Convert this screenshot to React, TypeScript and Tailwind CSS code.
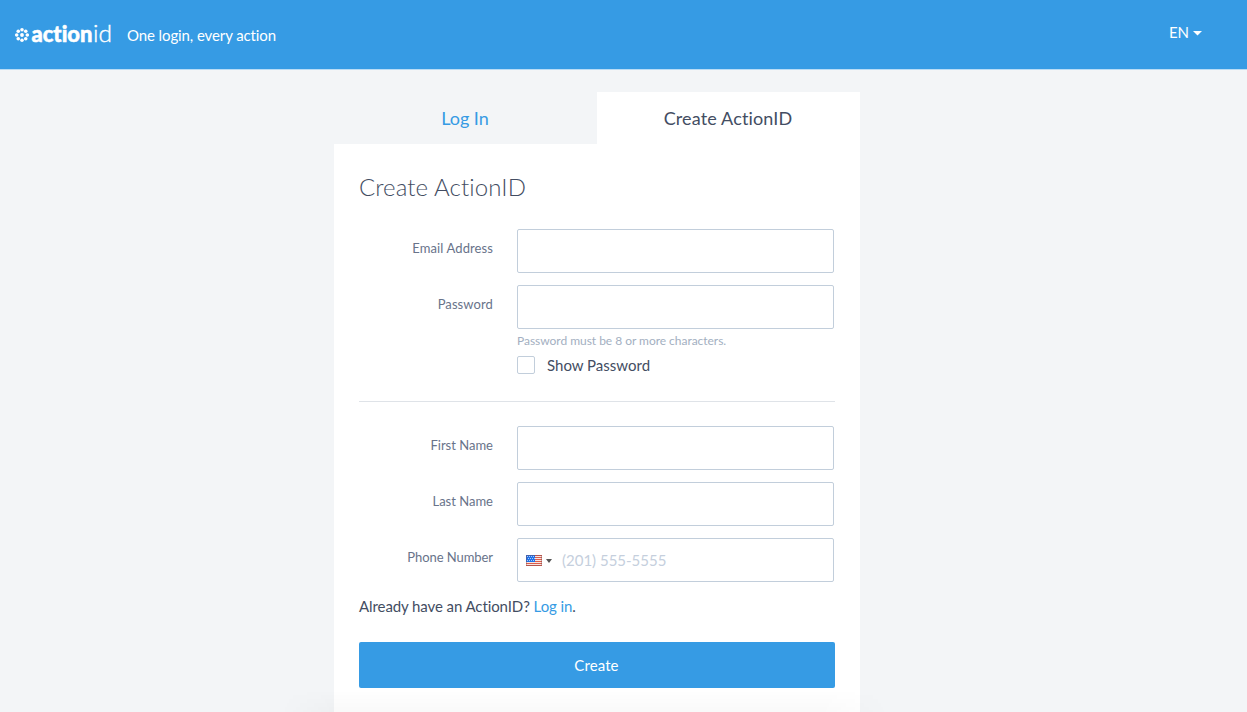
import React from "react";

const FIELD =
  "block h-11 w-[317px] rounded-[2px] border border-[#c2cedb] bg-white text-[15px] text-[#434d62] outline-none placeholder:text-[#c5cfdd] placeholder:opacity-100";

function Logo() {
  const dots = [0, 45, 90, 135, 180, 225, 270, 315];
  return (
    <svg className="overflow-visible" width="98" height="26" viewBox="0 0 98 26" fill="#fff" aria-label="actionid">
      <circle cx="7" cy="13" r="1.9" />
      {dots.map((a) => (
        <circle
          key={a}
          cx={7 + 5.3 * Math.cos((a * Math.PI) / 180)}
          cy={13 + 5.3 * Math.sin((a * Math.PI) / 180)}
          r="1.8"
        />
      ))}
      <text x="16.5" y="20" fontFamily="Lato, sans-serif" fontWeight="900" fontSize="22" stroke="#fff" strokeWidth=".5" textLength="61" lengthAdjust="spacingAndGlyphs">
        action
      </text>
      <text x="78" y="20" fontFamily="Lato, sans-serif" fontWeight="300" fontSize="24" stroke="#fff" strokeWidth=".4" textLength="19" lengthAdjust="spacingAndGlyphs">
        id
      </text>
    </svg>
  );
}

function Flag() {
  return (
    <svg width="16" height="11" viewBox="0 0 16 11" shapeRendering="crispEdges">
      <rect width="16" height="11" fill="#f8e4df" />
      {[0, 2, 4, 6, 8, 10].map((y) => (
        <rect key={y} y={y} width="16" height="1" fill="#dc5d4c" />
      ))}
      <rect width="9" height="7" fill="#1f72ea" />
      {[1, 3, 5].map((y) =>
        [1, 3, 5, 7].map((x) => (
          <rect key={`${x}-${y}`} x={x + (y === 3 ? 1 : 0)} y={y} width="1" height="1" fill="#a9c9f8" />
        ))
      )}
      <path d="M0 0h16v11H0z M1 1v9h14V1z" fillRule="evenodd" fill="#7a4a50" fillOpacity=".4" />
    </svg>
  );
}

function Row({ label, tracking = "", children }: { label: string; tracking?: string; children: React.ReactNode }) {
  return (
    <div className="flex">
      <label className={`w-[134px] pt-[9px] text-right text-[13px] leading-5 text-[#68738a] ${tracking}`}>{label}</label>
      <div className="ml-6">{children}</div>
    </div>
  );
}

export default function App() {
  return (
    <div className="relative h-[712px] overflow-hidden bg-[#f3f5f7] font-['Lato',sans-serif] text-[15px] text-[#434d62] [font-variant-ligatures:none]">
      <header className="flex h-[70px] border-b border-[#b9dcf5] bg-[#369be4] pl-[15px] text-white">
        <div className="pt-[22px]">
          <Logo />
        </div>
        <span className="ml-[14px] mt-[25px] leading-5 tracking-[-0.1px]">One login, every action</span>
        <div className="ml-auto mr-[45px] mt-[22px] flex h-5 items-center gap-[4px] leading-5">
          EN
          <svg className="mt-[3px]" width="9" height="5" viewBox="0 0 9 5" fill="currentColor">
            <path d="M0 0h9L4.5 4.5z" />
          </svg>
        </div>
      </header>

      <main className="ml-[334px] mt-[22px] w-[526px]">
        <nav className="flex h-[52px] text-center text-[18px] leading-[52px]">
          <a className="w-[262px] text-[#369be4]">Log In</a>
          <a className="ml-px w-[263px] bg-white pr-px tracking-[0.14px]">Create ActionID</a>
        </nav>
        <form className="h-[568px] bg-white pl-[25px] pr-[25px] pt-7">
          <h1 className="text-[24px] font-light leading-[30px] tracking-[0.1px]">Create ActionID</h1>
          <div className="mt-[27px] flex flex-col gap-3">
            <Row label="Email Address" tracking="tracking-[0.1px]">
              <input className={FIELD} />
            </Row>
            <Row label="Password" tracking="tracking-[0.1px]">
              <input className={FIELD} />
              <p className="mt-1 text-[12px] leading-4 tracking-[-0.03px] text-[#a3afc1]">Password must be 8 or more characters.</p>
              <div className="mt-[7px] flex h-[18px] items-center">
                <span className="h-[18px] w-[18px] rounded-[2px] border border-[#c2cedb]" />
                <span className="ml-3">Show Password</span>
              </div>
            </Row>
          </div>
          <hr className="mt-[27px] border-[#dfe3e8]" />
          <div className="mt-6 flex flex-col gap-3">
            <Row label="First Name">
              <input className={FIELD} />
            </Row>
            <Row label="Last Name">
              <input className={FIELD} />
            </Row>
            <Row label="Phone Number" tracking="tracking-[-0.06px]">
              <div className={`${FIELD} flex items-center pl-2`}>
                <div className="flex items-center pt-px">
                  <Flag />
                  <svg className="ml-1" width="6" height="4" viewBox="0 0 6 4" fill="#555">
                    <path d="M0 0h6L3 4z" />
                  </svg>
                </div>
                <input
                  placeholder="(201) 555-5555"
                  className="ml-[10px] w-[240px] leading-5 outline-none placeholder:text-[#c5cfdd] placeholder:opacity-100"
                />
              </div>
            </Row>
          </div>
          <p className="mt-[14px] leading-5 tracking-[-0.09px]">
            Already have an ActionID? <a className="text-[#369be4]">Log in</a>.
          </p>
          <button type="button" className="mt-[26px] block h-[46px] w-[476px] rounded-[2px] bg-[#369be4] pr-px tracking-[0.1px] text-white">
            Create
          </button>
        </form>
      </main>
      <div className="pointer-events-none absolute bottom-0 left-[280px] h-[22px] w-[610px] bg-[linear-gradient(to_bottom,transparent,rgba(0,0,0,0.025))] [mask-image:linear-gradient(to_right,transparent,black_54px,black_540px,transparent)]" />
    </div>
  );
}
